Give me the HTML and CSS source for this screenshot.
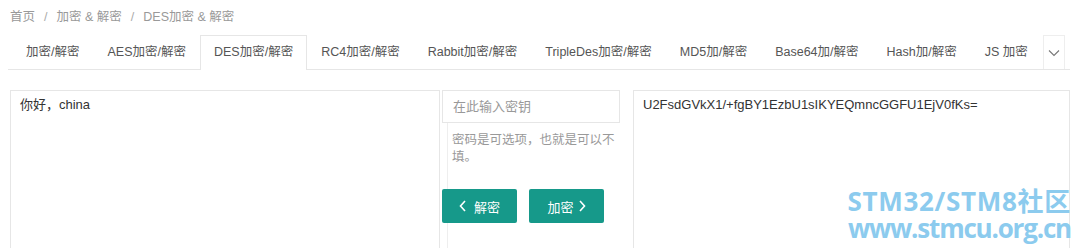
FILE: index.html
```html
<!DOCTYPE html>
<html lang="zh">
<head>
<meta charset="utf-8">
<title>DES加密 &amp; 解密</title>
<link rel="stylesheet" href="styles.css">
</head>
<body>
<div class="page">
  <div class="crumb">首页<span class="sep">/</span>加密 &amp; 解密<span class="sep">/</span>DES加密 &amp; 解密</div>
  <div class="tabs">
    <div class="tab first">加密/解密</div>
    <div class="tab">AES加密/解密</div>
    <div class="tab active">DES加密/解密</div>
    <div class="tab">RC4加密/解密</div>
    <div class="tab">Rabbit加密/解密</div>
    <div class="tab">TripleDes加密/解密</div>
    <div class="tab">MD5加/解密</div>
    <div class="tab">Base64加/解密</div>
    <div class="tab">Hash加/解密</div>
    <div class="tab">JS 加密</div>
    <div class="more"><svg width="12" height="8" viewBox="0 0 12 8"><path d="M1 1.5 L6 6.5 L11 1.5" fill="none" stroke="#777" stroke-width="1.1"/></svg></div>
  </div>
  <div class="work">
    <div class="panel left">你好，china</div>
    <div class="mid">
      <div class="key">在此输入密钥</div>
      <div class="hintbox">
        <div class="hint">密码是可选项，也就是可以不填。</div>
        <div class="btns">
          <div class="btn"><svg class="chev l" width="7" height="12" viewBox="0 0 7 12"><path d="M6 1 L1.5 6 L6 11" fill="none" stroke="#fff" stroke-width="1.6"/></svg>解密</div>
          <div class="btn">加密<svg class="chev r" width="7" height="12" viewBox="0 0 7 12"><path d="M1 1 L5.5 6 L1 11" fill="none" stroke="#fff" stroke-width="1.6"/></svg></div>
        </div>
      </div>
    </div>
    <div class="panel right">U2FsdGVkX1/+fgBY1EzbU1sIKYEQmncGGFU1EjV0fKs=</div>
  </div>
</div>
<div class="mark">
  <div class="m1">STM32/STM8社区</div>
  <div class="m2">www.stmcu.org.cn</div>
</div>
</body>
</html>
```
FILE: styles.css
```css
html, body {
  margin: 0;
  height: 248px;
  overflow: hidden;
  background: #fff;
}
body {
  font-family: "Liberation Sans", Arial, "Noto Sans CJK SC", sans-serif;
  font-size: 13px;
  color: #555;
  position: relative;
}
.page {
  padding: 8px 10px 0 10px;
  height: 248px;
  box-sizing: border-box;
  overflow: hidden;
}
.crumb {
  line-height: 18px;
  height: 18px;
  color: #999;
  font-size: 12.5px;
}
.sep {
  margin: 0 9px;
  color: #aaa;
}
.tabs {
  margin-top: 9px;
  margin-left: -2px;
  height: 34px;
  border-bottom: 1px solid #e6e6e6;
  display: flex;
}
.tab {
  line-height: 33px;
  padding: 0 13px;
  border: 1px solid transparent;
  border-bottom: none;
  box-sizing: border-box;
  height: 34px;
  color: #555;
  font-size: 12.5px;
  white-space: nowrap;
}
.tab.first {
  margin-left: 4px;
}
.tab.active {
  border-color: #e6e6e6;
  background: #fff;
  height: 35px;
}
.more {
  margin-left: auto;
  margin-right: 5px;
  width: 22px;
  height: 34px;
  box-sizing: border-box;
  border: 1px solid #eee;
  border-bottom: none;
  display: flex;
  align-items: center;
  justify-content: center;
}
.work {
  margin-top: 20px;
  display: flex;
  align-items: flex-start;
}
.panel {
  height: 165px;
  border: 1px solid #e6e6e6;
  border-bottom: none;
  box-sizing: border-box;
  padding: 5px 9px;
  line-height: 18px;
  color: #333;
}
.left {
  width: 430px;
}
.mid {
  margin-left: 2px;
  width: 178px;
}
.key {
  height: 33px;
  box-sizing: border-box;
  border: 1px solid #e6e6e6;
  padding: 0 10px;
  line-height: 31px;
  color: #999;
}
.hintbox {
  margin-left: 5px;
  border-left: 1px solid #eee;
  height: 126px;
  box-sizing: border-box;
  padding: 9px 0 0 4px;
}
.hint {
  font-size: 12.5px;
  line-height: 17px;
  color: #999;
  width: 168px;
}
.btns {
  margin-top: 23px;
  margin-left: -10px;
  display: flex;
  gap: 12px;
}
.btn {
  width: 75px;
  height: 34px;
  background: #16998a;
  color: #fff;
  border-radius: 2px;
  display: flex;
  align-items: center;
  justify-content: center;
  font-size: 13px;
}
.chev.l {
  margin-right: 8px;
}
.chev.r {
  margin-left: 5px;
}
.right {
  margin-left: 13px;
  flex: 1;
}
.mark {
  position: absolute;
  right: 9px;
  top: 188px;
  font-family: "Open Sans", "Noto Sans CJK SC", sans-serif;
  font-weight: 700;
  color: #8ccbee;
  font-size: 26px;
  line-height: 27px;
  text-align: right;
}
.m1 {
  letter-spacing: 0.7px;
}
.m2 {
  letter-spacing: -1.2px;
}
```
